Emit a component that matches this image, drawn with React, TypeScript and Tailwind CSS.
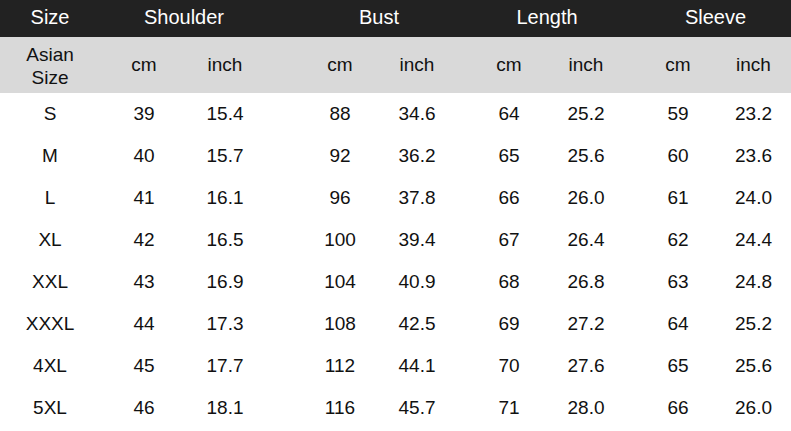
const rows: [string, string, string, string, string, string, string, string, string][] = [
  ["S", "39", "15.4", "88", "34.6", "64", "25.2", "59", "23.2"],
  ["M", "40", "15.7", "92", "36.2", "65", "25.6", "60", "23.6"],
  ["L", "41", "16.1", "96", "37.8", "66", "26.0", "61", "24.0"],
  ["XL", "42", "16.5", "100", "39.4", "67", "26.4", "62", "24.4"],
  ["XXL", "43", "16.9", "104", "40.9", "68", "26.8", "63", "24.8"],
  ["XXXL", "44", "17.3", "108", "42.5", "69", "27.2", "64", "25.2"],
  ["4XL", "45", "17.7", "112", "44.1", "70", "27.6", "65", "25.6"],
  ["5XL", "46", "18.1", "116", "45.7", "71", "28.0", "66", "26.0"],
];

// size | sh cm | sh inch | gap | bust cm | bust inch | gap | len cm | len inch | gap | sl cm | sl inch
const cols = "grid grid-cols-[100px_88px_74px_40px_76px_78px_14px_78px_76px_16px_76px_75px]";

function Row({ cells }: { cells: string[] }) {
  const [size, a, b, c, d, e, f, g, h] = cells;
  return (
    <div className={`${cols} h-[42px] items-center text-center`}>
      <span>{size}</span>
      <span>{a}</span>
      <span>{b}</span>
      <span />
      <span>{c}</span>
      <span>{d}</span>
      <span />
      <span>{e}</span>
      <span>{f}</span>
      <span />
      <span>{g}</span>
      <span>{h}</span>
    </div>
  );
}

export default function App() {
  return (
    <div className="w-[791px] h-[431px] bg-white text-[19px] text-[#111] font-['Liberation_Sans',Arial,sans-serif] overflow-hidden">
      <div className={`${cols} h-[37px] pb-[3px] items-center text-center bg-[#222222] text-white text-[20px]`}>
        <span>Size</span>
        <span className="col-span-2 pl-[6px]">Shoulder</span>
        <span />
        <span className="col-span-2">Bust</span>
        <span />
        <span className="col-span-2">Length</span>
        <span />
        <span className="col-span-2">Sleeve</span>
      </div>
      <div className={`${cols} h-[56px] items-center text-center bg-[#d9d9d9]`}>
        <span className="leading-[23px] pt-[2px]">
          Asian
          <br />
          Size
        </span>
        <span>cm</span>
        <span>inch</span>
        <span />
        <span>cm</span>
        <span>inch</span>
        <span />
        <span>cm</span>
        <span>inch</span>
        <span />
        <span>cm</span>
        <span>inch</span>
      </div>
      {rows.map((r) => (
        <Row key={r[0]} cells={r} />
      ))}
    </div>
  );
}
